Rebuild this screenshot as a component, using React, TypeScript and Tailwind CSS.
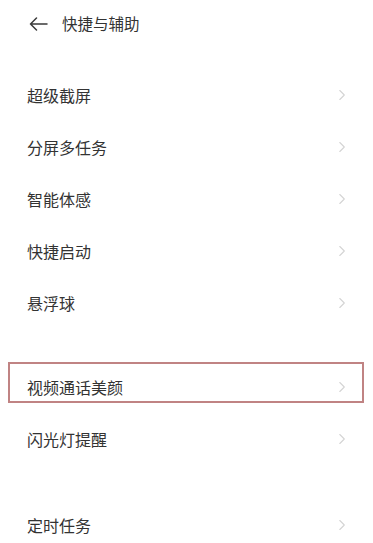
import React from "react";

const Chevron = () => (
  <svg width="8" height="12" viewBox="0 0 8 12" fill="none" className="shrink-0">
    <path d="M1.8 1.5 L6.3 6 L1.8 10.5" stroke="#d4d4d4" strokeWidth="1.1" strokeLinecap="round" strokeLinejoin="round" />
  </svg>
);

const Row = ({ label, boxed }: { label: string; boxed?: boolean }) => (
  <div className="relative flex h-[52px] items-center justify-between pl-[27px] pr-[27px]">
    {boxed && (
      <div className="pointer-events-none absolute left-[8px] right-[9px] top-[1px] h-[41px] border-2 border-[#c08383]" />
    )}
    <span className="text-[16px] leading-none text-[#333333]">{label}</span>
    <Chevron />
  </div>
);

export default function App() {
  return (
    <div
      className="h-[543px] w-[373px] overflow-hidden bg-white"
      style={{ fontFamily: '"Noto Sans CJK SC", "Noto Sans", sans-serif' }}
    >
      <div className="flex h-12 items-center pl-[29px]">
        <svg width="19" height="14" viewBox="0 0 19 14" fill="none">
          <path d="M18 7 H1.5 M7.5 1 L1.5 7 L7.5 13" stroke="#3a3a3a" strokeWidth="1.5" strokeLinecap="round" strokeLinejoin="round" />
        </svg>
        <span className="ml-[14px] text-[15.5px] leading-none text-[#333333]">快捷与辅助</span>
      </div>
      <div className="h-[21px]" />
      <Row label="超级截屏" />
      <Row label="分屏多任务" />
      <Row label="智能体感" />
      <Row label="快捷启动" />
      <Row label="悬浮球" />
      <div className="h-[32px]" />
      <Row label="视频通话美颜" boxed />
      <Row label="闪光灯提醒" />
      <div className="h-[34px]" />
      <Row label="定时任务" />
    </div>
  );
}
